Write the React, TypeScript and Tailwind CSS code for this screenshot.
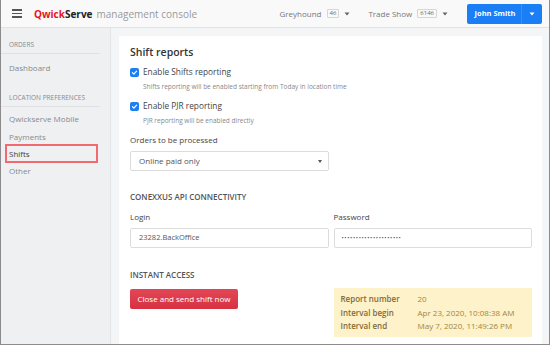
import React from "react";

const Check = () => (
  <span className="w-[9px] h-[9px] rounded-[2px] bg-[#1b7ef2] flex items-center justify-center shrink-0">
    <svg width="7" height="7" viewBox="0 0 8 8">
      <path d="M1.6 4.2 L3.3 5.8 L6.4 2.4" stroke="white" strokeWidth="1.4" fill="none" strokeLinecap="round" strokeLinejoin="round" />
    </svg>
  </span>
);

const Caret = ({ color = "#666" }: { color?: string }) => (
  <svg width="6" height="4" viewBox="0 0 6 4">
    <path d="M0.5 0.5 L5.5 0.5 L3 3.5 Z" fill={color} />
  </svg>
);

export default function App() {
  return (
    <div className="w-[550px] h-[345px] flex flex-col overflow-hidden border-l border-r border-b border-[#8c8c8c] font-['Open_Sans',sans-serif] bg-[#f4f5f6]">
      {/* Header */}
      <div className="h-[28px] shrink-0 flex items-center bg-[#f9f9f9] border-b border-[#e2e2e2]">
        <div className="ml-[11px] w-[10px] flex flex-col gap-[2px]">
          <span className="h-[1.5px] bg-[#555]" />
          <span className="h-[1.5px] bg-[#555]" />
          <span className="h-[1.5px] bg-[#555]" />
        </div>
        <div className="ml-[12px] text-[10px] leading-none flex items-baseline">
          <span className="font-bold text-[#e4161f]">Qwick</span>
          <span className="font-bold text-[#222]">Serve</span>
          <span className="ml-[4px] text-[#999]">management console</span>
        </div>
        <div className="ml-auto flex items-center text-[8px] text-[#777]">
          <span>Greyhound</span>
          <span className="ml-[5px] h-[9px] px-[2px] border border-[#d6d6d6] rounded-[1px] text-[6px] text-[#666] flex items-center">46</span>
          <span className="ml-[5px]"><Caret /></span>
          <span className="ml-[18px]">Trade Show</span>
          <span className="ml-[5px] h-[9px] px-[2px] border border-[#d6d6d6] rounded-[1px] text-[6px] text-[#666] flex items-center">6146</span>
          <span className="ml-[5px]"><Caret /></span>
          <div className="ml-[19px] mr-[7px] h-[20px] w-[75px] rounded-[2px] bg-[#1a7ef5] flex items-center text-white">
            <span className="flex-1 text-center text-[7.5px] font-bold pl-[2px]">John Smith</span>
            <span className="w-[21px] h-full flex items-center justify-center border-l border-[#3a8ff5]">
              <Caret color="#fff" />
            </span>
          </div>
        </div>
      </div>

      {/* Body */}
      <div className="flex flex-1 min-h-0">
        {/* Sidebar */}
        <div className="w-[110px] shrink-0 bg-[#eef0f2] border-r border-[#e3e5e8] text-[8px] text-[#8a8a8a]">
          <div className="mt-[12px] mr-[10px] pl-[8px] pb-[3px] border-b border-[#dfe1e4] text-[6.5px] leading-[10px] text-[#8a8a8a]">ORDERS</div>
          <div className="mt-[8px] pl-[8px] leading-[12px]">Dashboard</div>
          <div className="mt-[19px] mr-[10px] pl-[8px] pb-[3px] border-b border-[#dfe1e4] text-[6.5px] leading-[10px] text-[#8a8a8a]">LOCATION PREFERENCES</div>
          <div className="mt-[6px] pl-[8px] leading-[12px]">Qwickserve Mobile</div>
          <div className="mt-[6px] pl-[8px] leading-[12px]">Payments</div>
          <div className="mt-[1px] ml-[4px] w-[93px] h-[19px] border-2 border-[#f06a70] pl-[2px] flex items-center text-[#444]">Shifts</div>
          <div className="mt-[2px] pl-[8px] leading-[12px]">Other</div>
        </div>

        {/* Main */}
        <div className="flex-1 pt-[8px] pl-[8px] pr-[7px] min-w-0">
          <div className="bg-white h-full pt-[9px] pl-[11px] pr-[10px]">
            <div className="text-[10.5px] leading-[14px] font-semibold text-[#333]">Shift reports</div>

            <div className="mt-[7px] h-[12px] flex items-center gap-[4px]">
              <Check />
              <span className="text-[8.3px] text-[#444]">Enable Shifts reporting</span>
            </div>
            <div className="mt-[4px] pl-[13px] text-[6.5px] leading-[9px] text-[#888]">
              Shifts reporting will be enabled starting from Today in location time
            </div>

            <div className="mt-[9px] h-[12px] flex items-center gap-[4px]">
              <Check />
              <span className="text-[8.3px] text-[#444]">Enable PJR reporting</span>
            </div>
            <div className="mt-[4px] pl-[13px] text-[6.5px] leading-[9px] text-[#888]">
              PJR reporting will be enabled directly
            </div>

            <div className="mt-[9px] text-[8px] leading-[12px] text-[#444]">Orders to be processed</div>
            <div className="mt-[5px] w-[199px] h-[20px] border border-[#dcdcdc] rounded-[2px] flex items-center pl-[8px] pr-[6px] text-[8px] text-[#555]">
              <span className="flex-1">Online paid only</span>
              <svg width="4" height="3" viewBox="0 0 4 3"><path d="M0 0 L4 0 L2 3 Z" fill="#555" /></svg>
            </div>

            <div className="mt-[21px] text-[8px] leading-[10px] font-semibold text-[#555]">CONEXXUS API CONNECTIVITY</div>

            <div className="mt-[9px] grid grid-cols-2 gap-x-[5px]">
              <div>
                <div className="text-[8px] leading-[12px] text-[#444]">Login</div>
                <div className="mt-[5px] h-[20px] border border-[#dcdcdc] rounded-[2px] flex items-center pl-[8px] text-[7.5px] text-[#555]">23282.BackOffice</div>
              </div>
              <div>
                <div className="text-[8px] leading-[12px] text-[#444]">Password</div>
                <div className="mt-[5px] h-[20px] border border-[#dcdcdc] rounded-[2px] flex items-center pl-[7px] text-[6px] tracking-[0.6px] text-[#555]">•••••••••••••••••••••</div>
              </div>
            </div>

            <div className="mt-[22px] text-[8px] leading-[10px] font-semibold text-[#555]">INSTANT ACCESS</div>

            <div className="mt-[8px] grid grid-cols-2 gap-x-[5px] items-start">
              <div>
                <div className="mt-[1px] w-[108px] h-[20px] rounded-[2px] bg-gradient-to-b from-[#e24656] to-[#d73041] text-white text-[8px] flex items-center justify-center">
                  Close and send shift now
                </div>
              </div>
              <div className="h-[49px] bg-[#fdf2c9] pl-[7px] pt-[4px] text-[8px] leading-[13.5px]">
                <div className="flex"><span className="w-[77px] font-semibold text-[#856a35]">Report number</span><span className="text-[#a28544]">20</span></div>
                <div className="flex"><span className="w-[77px] font-semibold text-[#856a35]">Interval begin</span><span className="text-[#a28544]">Apr 23, 2020, 10:08:38 AM</span></div>
                <div className="flex"><span className="w-[77px] font-semibold text-[#856a35]">Interval end</span><span className="text-[#a28544]">May 7, 2020, 11:49:26 PM</span></div>
              </div>
            </div>
          </div>
        </div>
      </div>
    </div>
  );
}
